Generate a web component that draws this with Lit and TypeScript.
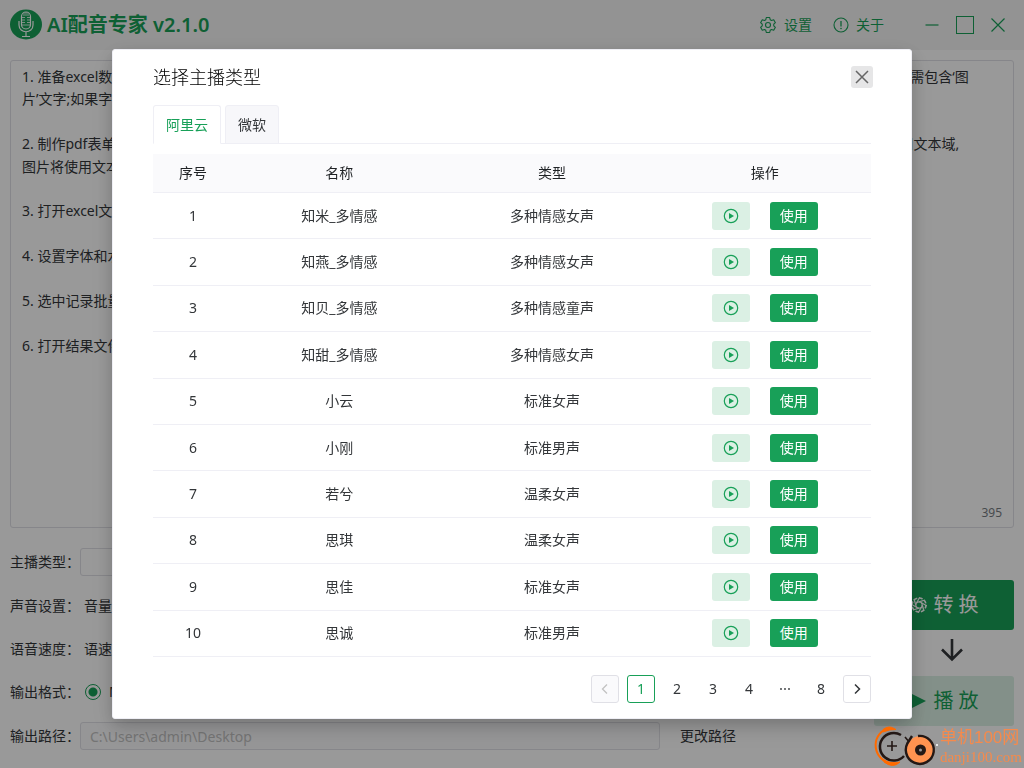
import { LitElement, html, css, svg } from "lit";
import { customElement, state } from "lit/decorators.js";

interface Anchor {
  name: string;
  kind: string;
}

const ANCHORS: Anchor[] = [
  { name: "知米_多情感", kind: "多种情感女声" },
  { name: "知燕_多情感", kind: "多种情感女声" },
  { name: "知贝_多情感", kind: "多种情感童声" },
  { name: "知甜_多情感", kind: "多种情感女声" },
  { name: "小云", kind: "标准女声" },
  { name: "小刚", kind: "标准男声" },
  { name: "若兮", kind: "温柔女声" },
  { name: "思琪", kind: "温柔女声" },
  { name: "思佳", kind: "标准女声" },
  { name: "思诚", kind: "标准男声" },
];

const SCRIPT_TEXT = [
  "1. 准备excel数据文件，第一行为字段名称，从第二行开始为每条记录的具体内容，每一行对应一份结果文件；如果字段内容为图片，则字段名称需包含‘图",
  "片’文字;如果字段为普通文字则无需处理",
  "",
  "2. 制作pdf表单模板文件，请使用编辑软件打开模板并添加表单域，表单域名称要与数据文件的字段名称保持一致，文字和图片类型统一都要使用文本域,",
  "图片将使用文本域的位置和大小",
  "",
  "3. 打开excel文件和模板文件",
  "",
  "4. 设置字体和水印等参数",
  "",
  "5. 选中记录批量生成文件",
  "",
  "6. 打开结果文件夹查看",
].join("\n");

const playIcon = svg`<svg class="play" viewBox="0 0 16 16" width="16" height="16" aria-hidden="true">
  <circle cx="8" cy="8" r="6.7" fill="none" stroke="currentColor" stroke-width="1.2"/>
  <path d="M6 5.1v5.8L11 8z" fill="currentColor"/></svg>`;

@customElement("anchor-dialog")
export class AnchorDialog extends LitElement {
  @state() private tab = 0;
  @state() private page = 1;

  static styles = css`
    :host {
      display: block;
      box-sizing: border-box;
      width: 800px;
      max-width: 100%;
      padding: 16px 40px 15px;
      border: 1px solid #efeff5;
      border-radius: 3px;
      background: #fff;
      color: #333639;
      box-shadow: 0 6px 16px rgba(0, 0, 0, 0.16), 0 9px 28px rgba(0, 0, 0, 0.1);
    }
    button {
      font: inherit;
      margin: 0;
      padding: 0;
      cursor: pointer;
    }
    .top {
      display: flex;
      align-items: center;
      justify-content: space-between;
      height: 22px;
      margin-right: -2px;
    }
    h2 {
      margin: 0;
      font-size: 18px;
      line-height: 22px;
      font-weight: 300;
      color: #000;
    }
    .close {
      display: grid;
      place-items: center;
      width: 22px;
      height: 22px;
      border: 0;
      border-radius: 3px;
      background: #e6e6e7;
      color: #666;
    }
    .tabs {
      display: flex;
      gap: 4px;
      margin-top: 17px;
      box-shadow: inset 0 -1px #efeff5;
    }
    .tab {
      height: 39px;
      padding: 0 12px;
      border: 1px solid #efeff5;
      border-radius: 3px 3px 0 0;
      background: #f7f7fa;
      color: #333639;
    }
    .tab.on {
      background: #fff;
      border-bottom-color: #fff;
      color: #18a058;
    }
    table {
      width: 100%;
      height: 503px;
      margin-top: 10px;
      border-collapse: separate;
      border-spacing: 0;
      table-layout: fixed;
      text-align: center;
    }
    .index {
      width: 80px;
    }
    th {
      height: 38px;
      padding: 0;
      font-weight: 400;
      color: #1f2225;
      background: #fafafc;
      border-bottom: 1px solid #efeff5;
    }
    td {
      padding: 0;
      border-bottom: 1px solid #efeff5;
    }
    .ops {
      display: flex;
      justify-content: center;
      gap: 20px;
    }
    .listen,
    .use {
      display: grid;
      place-items: center;
      height: 28px;
      border: 0;
      border-radius: 3px;
    }
    .listen {
      width: 38px;
      background: #dbf0e4;
      color: #18a058;
    }
    .use {
      width: 48px;
      background: #18a058;
      color: #fff;
    }
    .pages {
      display: flex;
      justify-content: flex-end;
      gap: 8px;
      margin-top: 18px;
    }
    .page {
      display: grid;
      place-items: center;
      box-sizing: border-box;
      width: 28px;
      height: 28px;
      border: 1px solid transparent;
      border-radius: 3px;
      background: none;
      color: #333639;
    }
    .page.on {
      border-color: #18a058;
      color: #18a058;
    }
    .arrow {
      border-color: #e0e0e6;
    }
    .arrow:disabled {
      background: #fafafc;
      color: #c2c2c2;
    }
  `;

  render() {
    return html`
      <div class="top">
        <h2>选择主播类型</h2>
        <button class="close" aria-label="关闭">
          <svg width="14" height="14" viewBox="0 0 14 14"><path d="M1 1l12 12M13 1L1 13" stroke="currentColor" stroke-width="1.5" /></svg>
        </button>
      </div>
      <div class="tabs" role="tablist">
        ${["阿里云", "微软"].map(
          (t, i) => html`<button class="tab ${i === this.tab ? "on" : ""}" role="tab" aria-selected=${i === this.tab} @click=${() => (this.tab = i)}>${t}</button>`
        )}
      </div>
      <table>
        <thead>
          <tr><th class="index">序号</th><th>名称</th><th>类型</th><th>操作</th></tr>
        </thead>
        <tbody>
          ${ANCHORS.map(
            (a, i) => html`<tr>
              <td>${i + 1}</td>
              <td>${a.name}</td>
              <td>${a.kind}</td>
              <td><div class="ops"><button class="listen" aria-label="试听">${playIcon}</button><button class="use">使用</button></div></td>
            </tr>`
          )}
        </tbody>
      </table>
      <nav class="pages" aria-label="分页">
        <button class="page arrow" disabled aria-label="上一页">
          <svg width="14" height="14" viewBox="0 0 14 14" fill="none"><path d="M9 2.5L4.5 7L9 11.5" stroke="currentColor" stroke-width="1.3" /></svg>
        </button>
        ${[1, 2, 3, 4].map((n) => html`<button class="page ${n === this.page ? "on" : ""}" @click=${() => (this.page = n)}>${n}</button>`)}
        <button class="page" aria-label="更多页">
          <svg width="12" height="4" viewBox="0 0 12 4" fill="currentColor"><circle cx="2" cy="2" r=".9" /><circle cx="6" cy="2" r=".9" /><circle cx="10" cy="2" r=".9" /></svg>
        </button>
        <button class="page">8</button>
        <button class="page arrow" aria-label="下一页">
          <svg width="14" height="14" viewBox="0 0 14 14" fill="none"><path d="M5 2.5L9.5 7L5 11.5" stroke="currentColor" stroke-width="1.5" /></svg>
        </button>
      </nav>
    `;
  }
}

@customElement("app-root")
export class AppRoot extends LitElement {
  static styles = css`
    :host {
      display: flex;
      flex-direction: column;
      height: 100vh;
      overflow: hidden;
      background: #fff;
      color: #333639;
      font: 400 14px/22px "Noto Sans", "Noto Sans CJK SC", sans-serif;
    }
    button,
    input,
    textarea {
      font: inherit;
      color: inherit;
      margin: 0;
    }
    button {
      border: 0;
      padding: 0;
      background: none;
      cursor: pointer;
    }
    header {
      display: flex;
      align-items: center;
      height: 50px;
      flex: none;
      padding: 0 18px 0 10px;
      background: #f5f5f5;
      color: #18a058;
    }
    h1 {
      flex: 1;
      margin: 0 0 0 5px;
      font-size: 20px;
      line-height: 26px;
      font-weight: 600;
    }
    .menu {
      display: flex;
      gap: 21px;
      margin-right: 40px;
    }
    .menu button {
      display: flex;
      align-items: center;
      gap: 7px;
    }
    .window {
      display: flex;
      align-items: center;
      gap: 16px;
    }
    .window button,
    .convert svg,
    .playback svg {
      display: grid;
    }
    main {
      display: flex;
      flex-direction: column;
      flex: 1;
      gap: 20px;
      padding: 10px 10px 18px;
    }
    .editor {
      display: flex;
      flex-direction: column;
      flex: 1;
      border: 1px solid #e0e0e6;
      border-radius: 3px;
    }
    textarea {
      flex: 1;
      padding: 5px 11px;
      border: 0;
      outline: 0;
      resize: none;
      background: none;
      line-height: 1.6;
      overflow: hidden;
    }
    .count {
      align-self: flex-end;
      padding: 0 11px 3px;
      font-size: 12px;
      color: #767c82;
    }
    .bottom {
      display: flex;
      justify-content: space-between;
    }
    .form {
      display: flex;
      flex-direction: column;
      gap: 17px;
    }
    .row {
      display: flex;
      align-items: center;
      height: 26px;
    }
    .row.tall {
      height: 28px;
    }
    .name {
      width: 70px;
      white-space: nowrap;
    }
    .text {
      box-sizing: border-box;
      width: 580px;
      height: 28px;
      padding: 0 9px;
      border: 1px solid #e0e0e6;
      border-radius: 3px;
      background: #fff;
    }
    .text:disabled {
      background: #fafafc;
      color: #c2c2c2;
    }
    .inner {
      margin: 0 12px 0 4px;
    }
    .choice {
      display: flex;
      align-items: center;
      gap: 8px;
      margin-left: 5px;
    }
    .choice input {
      appearance: none;
      width: 16px;
      height: 16px;
      border: 1px solid #18a058;
      border-radius: 50%;
      background: radial-gradient(circle, #18a058 4px, transparent 5px);
    }
    input[type="range"] {
      width: 300px;
      accent-color: #18a058;
    }
    .change {
      margin-left: 20px;
    }
    .actions {
      display: flex;
      flex-direction: column;
      align-items: center;
      width: 140px;
      padding-top: 32px;
      color: #333639;
    }
    .convert,
    .playback {
      display: flex;
      align-items: center;
      justify-content: center;
      gap: 4px;
      width: 100%;
      height: 50px;
      border-radius: 3px;
      font-size: 20px;
    }
    .convert {
      background: #18a058;
      color: #fff;
    }
    .playback {
      background: #dbf0e4;
      color: #18a058;
    }
    .down {
      margin: 8px 0 14px 16px;
    }
    .mask {
      position: fixed;
      inset: 0;
      display: flex;
      align-items: center;
      justify-content: center;
      background: rgba(0, 0, 0, 0.4);
    }
    .mark {
      position: fixed;
      right: 2px;
      bottom: 0;
      display: flex;
      gap: 2px;
      color: #f58a4c;
      font-family: "Liberation Sans", "Noto Sans CJK SC", sans-serif;
    }
    .mark svg {
      display: block;
    }
    .site {
      font-size: 17px;
      line-height: 20px;
      padding-top: 8px;
    }
    .url {
      font-family: "Liberation Serif", serif;
      font-size: 15px;
      line-height: 18px;
    }
  `;

  render() {
    return html`
      <header>
        <svg width="32" height="32" viewBox="0 0 32 32" fill="none" stroke="#fff" stroke-width="1.2" aria-hidden="true">
          <ellipse cx="16" cy="15.5" rx="16" ry="15" fill="#18a058" stroke="none" />
          <rect x="11.5" y="3" width="9" height="17" rx="4.5" />
          <path d="M11.5 8.5h3.5M17 8.5h3.5M11.5 11h3.5M17 11h3.5M11.5 13.500h3.500M17 13.500h3.500M12 16h8M14 4v3M16 3v4M18 4v3" stroke-width="0.8" />
          <path d="M9 12v4c0 9 14 9 14 0v-4M16 23v4M12 27.500h8" />
        </svg>
        <h1>AI配音专家 v2.1.0</h1>
        <div class="menu">
          <button>
            <svg width="18" height="18" viewBox="0 0 18 18" fill="none" stroke="currentColor" stroke-width="1.1" stroke-linejoin="round">
              <path d="M7.300 1.500h3.400l.5 2.200 1.300.75 2.200-.7 1.700 2.950-1.650 1.500v1.600l1.650 1.500-1.700 2.950-2.200-.7-1.300.75-.5 2.200H7.300l-.5-2.200-1.300-.75-2.200.7-1.700-2.950 1.650-1.500V8.200L1.600 6.700l1.700-2.950 2.200.7 1.300-.75z" />
              <circle cx="9" cy="9" r="2.500" />
            </svg>设置
          </button>
          <button>
            <svg width="16" height="16" viewBox="0 0 16 16" fill="none" stroke="currentColor" stroke-width="1.1">
              <circle cx="8" cy="8" r="7" /><path d="M8 4v5.500" stroke-width="1.300" /><circle cx="8" cy="11.500" r=".8" fill="currentColor" stroke="none" />
            </svg>关于
          </button>
        </div>
        <div class="window">
          <button aria-label="最小化"><svg width="16" height="20" viewBox="0 0 16 20"><path d="M1.500 10h13" stroke="currentColor" stroke-width="1.200" /></svg></button>
          <button aria-label="最大化"><svg width="18" height="18" viewBox="0 0 18 18"><rect x=".5" y=".5" width="17" height="17" fill="none" stroke="currentColor" /></svg></button>
          <button aria-label="退出"><svg width="16" height="16" viewBox="0 0 16 16"><path d="M1.500 1.500l13 13M14.500 1.500l-13 13" stroke="currentColor" stroke-width="1.200" /></svg></button>
        </div>
      </header>
      <main>
        <div class="editor">
          <textarea aria-label="配音文本" .value=${SCRIPT_TEXT}></textarea>
          <div class="count">395</div>
        </div>
        <div class="bottom">
          <div class="form">
            <div class="row tall"><label class="name" for="anchor">主播类型：</label><input class="text" id="anchor" /></div>
            <div class="row"><span class="name">声音设置：</span><label class="inner" for="volume">音量</label><input type="range" id="volume" /></div>
            <div class="row"><span class="name">语音速度：</span><label class="inner" for="speed">语速</label><input type="range" id="speed" /></div>
            <div class="row"><span class="name">输出格式：</span><label class="choice"><input type="radio" name="format" checked />MP3</label></div>
            <div class="row tall">
              <label class="name" for="path">输出路径：</label><input class="text" id="path" disabled value="C:\\Users\\admin\\Desktop" />
              <button class="change">更改路径</button>
            </div>
          </div>
          <div class="actions">
            <button class="convert">
              <svg width="20" height="20" viewBox="0 0 20 20" fill="none" stroke="currentColor" stroke-width="1.300">
                <circle cx="10" cy="10" r="3.200" />
                <path d="M10 6.800L16 5M12.300 7.700L17.800 10.700M13.200 10L15 16M12.300 12.300L9.300 17.800M10 13.200L4 15M7.700 12.300L2.200 9.300M6.800 10L5 4M7.700 7.700L10.700 2.200" />
                <circle cx="10" cy="10" r="7" stroke-width="1.600" stroke-dasharray="3.500 2" />
              </svg>转 换
            </button>
            <svg class="down" width="24" height="24" viewBox="0 0 24 24" fill="none" stroke="currentColor" stroke-width="2.600"><path d="M12 1v20M2 11.500l10 10 10-10" /></svg>
            <button class="playback">
              <svg width="20" height="20" viewBox="0 0 20 20" fill="currentColor"><path d="M3 3v14l14-7z" /></svg>播 放
            </button>
          </div>
        </div>
      </main>
      <div class="mask"><anchor-dialog role="dialog" aria-label="选择主播类型"></anchor-dialog></div>
      <div class="mark">
        <svg width="64" height="48" viewBox="0 0 64 48" fill="none" aria-hidden="true">
          <path d="M16 8C-3 12 -3 37 15 43" stroke="#ff6a00" stroke-width="2" />
          <path d="M9 9.500Q15 5 20 8.500L22 9.500Q16 9 9 12zM10 40Q16 44 26 42Q19 49 10 42z" fill="#ff6a00" stroke="#ff6a00" />
          <path d="M27 15A13.800 13.800 0 1 0 30 36" stroke="#231815" stroke-width="2.500" />
          <path d="M31 17l5 6M18 21v10M13 26h10" stroke="#231815" stroke-width="1.600" />
          <circle cx="46.500" cy="30" r="14" fill="#ff9350" />
          <path d="M44 16A14 14 0 1 1 35 21M38 16L33 24" stroke="#231815" stroke-width="2.400" />
          <circle cx="46.500" cy="30" r="3.500" stroke="#231815" stroke-width="4" fill="#999" />
          <path d="M63 24v2" stroke="#fff" stroke-width="1.500" />
        </svg>
        <div>
          <div class="site">单机100网</div>
          <div class="url">danji100.com</div>
        </div>
      </div>
    `;
  }
}
